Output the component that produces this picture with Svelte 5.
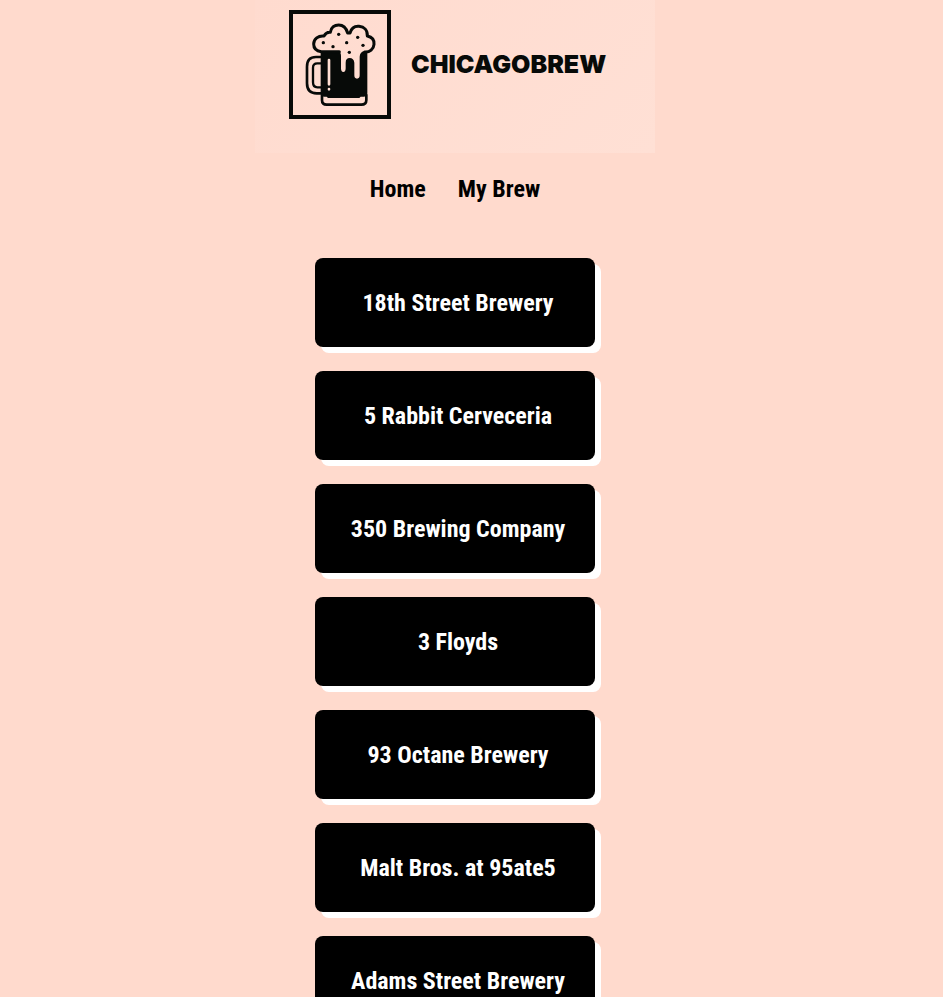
<script>
  const breweries = [
    '18th Street Brewery',
    '5 Rabbit Cerveceria',
    '350 Brewing Company',
    '3 Floyds',
    '93 Octane Brewery',
    'Malt Bros. at 95ate5',
    'Adams Street Brewery',
  ];
</script>

<div class="page">
  <header>
    <div class="logo">
      <svg viewBox="27 30 306 327" aria-hidden="true">
        <rect x="33" y="36" width="294" height="315" fill="none" stroke="#070a08" stroke-width="12" />
        <g fill="none" stroke="#070a08" stroke-linecap="round" stroke-linejoin="round">
          <path stroke-width="8" d="M124 171H108Q81 171 81 200V250Q81 280 110 280H124" />
          <path stroke-width="7" d="M124 190H112Q99 190 99 203V247Q99 262 112 262H124" />
          <path stroke-width="8" d="M126 285V300Q126 314 140 314H244Q259 314 259 300V285" />
        </g>
        <path fill="#070a08" d="M122 153H175Q183 156 183 168V205Q183 216 190 216T197 205V188Q197 174 209 174T223 188V226Q223 236 231 236T239 226V170Q240 156 252 153H262V280Q262 290 252 290H242L238 294H144L140 290H132Q122 290 122 280Z" />
        <path fill="none" stroke="#ffdfd3" stroke-width="8" stroke-linecap="round" d="M147 180V253M147 267V268" />
        <path fill="none" stroke="#070a08" stroke-width="9" stroke-linecap="round" stroke-linejoin="round" d="M178 155H124C108 153 101 143 101 132C101 117 115 106 132 108C137 99 144 96 151 97C153 82 164 75 176 75C190 75 199 85 203 99H210C214 85 225 78 237 79C253 80 263 91 262 108C276 111 283 121 282 133C281 147 269 157 255 156" />
        <g fill="#070a08">
          <circle cx="130" cy="128" r="5" /><circle cx="159" cy="140" r="5" />
          <circle cx="176" cy="103" r="5" /><circle cx="200" cy="128" r="5" />
          <circle cx="208" cy="157" r="5" /><circle cx="233" cy="112" r="5" />
          <circle cx="249" cy="136" r="5" />
        </g>
      </svg>
      <span class="wordmark">CHICAGOBREW</span>
    </div>
    <nav>
      <a href="#home">Home</a>
      <a href="#my-brew">My Brew</a>
    </nav>
  </header>
  <main>
    <ul>
      {#each breweries as name}
        <li><button type="button">{name}</button></li>
      {/each}
    </ul>
  </main>
</div>

<style>
  :global(body) {
    margin: 0;
    background: #ffdacd;
  }
  .page {
    padding-right: 33px;
    font-family: 'Roboto Condensed', 'Liberation Sans Narrow', Roboto, sans-serif;
    font-size: 24px;
    font-weight: 700;
    line-height: 28px;
  }
  header {
    display: flex;
    flex-direction: column;
    align-items: center;
  }
  .logo {
    box-sizing: border-box;
    display: flex;
    align-items: center;
    gap: 20px;
    width: 400px;
    max-width: 100%;
    padding: 10px 34px 34px;
    background: linear-gradient(135deg, #ffdbcf, #ffe0d5);
  }
  svg {
    flex: none;
    width: 102px;
    height: 109px;
  }
  .wordmark {
    padding-bottom: 2px;
    color: #070a08;
    font-family: Inter, sans-serif;
    font-size: 25px;
    font-weight: 900;
  }
  nav {
    display: flex;
    gap: 32px;
    padding: 22px 0 55px;
  }
  a {
    color: #000;
    text-decoration: none;
  }
  ul {
    display: flex;
    flex-direction: column;
    align-items: center;
    gap: 24px;
    margin: 0;
    padding: 0;
    list-style: none;
  }
  button {
    width: 280px;
    height: 89px;
    padding: 0 0 0 6px;
    border: 0;
    border-radius: 8px;
    background: #000;
    box-shadow: 6px 6px 0 #fff;
    color: #fff;
    font: inherit;
    cursor: pointer;
  }
</style>
